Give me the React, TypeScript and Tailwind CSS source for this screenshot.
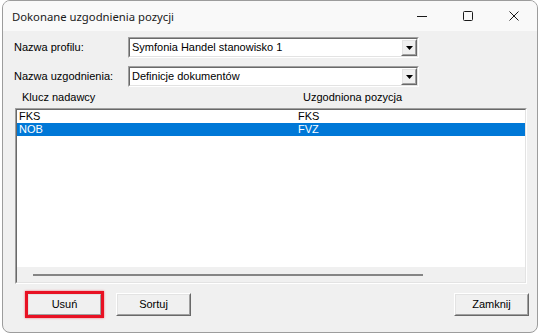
const sunkenOuter = "border border-t-[#a0a0a0] border-l-[#a0a0a0] border-b-white border-r-white";
const sunkenInner = "border border-t-[#696969] border-l-[#696969] border-b-[#e3e3e3] border-r-[#e3e3e3]";
const raisedOuter = "border border-t-white border-l-white border-b-[#696969] border-r-[#696969]";
const raisedInner = "border border-t-[#e3e3e3] border-l-[#e3e3e3] border-b-[#a0a0a0] border-r-[#a0a0a0]";

const ComboBox = ({ value }: { value: string }) => (
  <div className={`w-[291px] h-[21px] ${sunkenOuter}`}>
    <div className={`h-full bg-white flex items-center ${sunkenInner}`}>
      <span className="flex-1 pl-[2px] truncate">{value}</span>
      <div className={`w-[16px] h-full bg-[#f0f0f0] ${raisedOuter}`}>
        <div className={`h-full flex items-center justify-center ${raisedInner}`}>
          <svg width="7" height="4" viewBox="0 0 7 4">
            <path d="M0 0H7L3.5 4Z" fill="#000" />
          </svg>
        </div>
      </div>
    </div>
  </div>
);

const Btn = ({ label }: { label: string }) => (
  <div className={`w-[75px] h-[23px] bg-[#f0f0f0] ${raisedOuter}`}>
    <div className={`h-full flex items-center justify-center ${raisedInner}`}>
      {label}
    </div>
  </div>
);

const rows = [
  { key: "FKS", value: "FKS", selected: false },
  { key: "NOB", value: "FVZ", selected: true },
];

export default function App() {
  return (
    <div className="w-[541px] h-[336px] bg-white pl-[2px]">
      <div className="w-[536px] h-[333px] rounded-[8px] border border-[#9c9c9c] overflow-hidden flex flex-col bg-[#f0f0f0] text-[11px] leading-[13px] text-black font-['Liberation_Sans',Arial,sans-serif]">
        {/* Title bar */}
        <div className="h-[30px] flex items-center bg-[#f9f9f9] shrink-0">
          <span className="flex-1 pl-[9px] text-[11.3px] text-[#1a1a1a] font-['Noto_Sans',sans-serif]">
            Dokonane uzgodnienia pozycji
          </span>
          <div className="w-[46px] h-full flex items-center justify-center">
            <svg width="10" height="10" viewBox="0 0 10 10">
              <path d="M0 5.5H10" stroke="#1a1a1a" strokeWidth="1" />
            </svg>
          </div>
          <div className="w-[46px] h-full flex items-center justify-center">
            <svg width="10" height="10" viewBox="0 0 10 10">
              <rect x="0.5" y="0.5" width="9" height="9" rx="1" fill="none" stroke="#1a1a1a" strokeWidth="1" />
            </svg>
          </div>
          <div className="w-[46px] h-full flex items-center justify-center">
            <svg width="10" height="10" viewBox="0 0 10 10">
              <path d="M0.5 0.5L9.5 9.5M9.5 0.5L0.5 9.5" stroke="#1a1a1a" strokeWidth="1" />
            </svg>
          </div>
        </div>

        {/* Body */}
        <div className="flex-1 flex flex-col pt-[6px]">
          <div className="h-[21px] flex items-center">
            <span className="w-[125px] pl-[11px]">Nazwa profilu:</span>
            <ComboBox value="Symfonia Handel stanowisko 1" />
          </div>
          <div className="h-[21px] mt-[8px] flex items-center">
            <span className="w-[125px] pl-[11px]">Nazwa uzgodnienia:</span>
            <ComboBox value="Definicje dokumentów" />
          </div>

          <div className="h-[21px] flex items-center">
            <span className="w-[300px] pl-[19px]">Klucz nadawcy</span>
            <span>Uzgodniona pozycja</span>
          </div>

          {/* List */}
          <div className={`ml-[12px] w-[512px] h-[176px] ${sunkenOuter}`}>
            <div className={`h-full flex flex-col ${sunkenInner}`}>
              <div className="h-[157px] bg-white">
                {rows.map((r) => (
                  <div
                    key={r.key}
                    className={`h-[13px] flex ${r.selected ? "bg-[#0078d7] text-white" : ""}`}
                  >
                    <span className="w-[279px] pl-[2px]">{r.key}</span>
                    <span className="pl-[2px]">{r.value}</span>
                  </div>
                ))}
              </div>
              <div className="flex-1 flex items-center">
                <div className="ml-[16px] w-[390px] h-[2px] bg-[#858585]" />
              </div>
            </div>
          </div>

          {/* Buttons */}
          <div className="mt-[9px] flex items-center pl-[24px] pr-[8px]">
            <div className="relative">
              <Btn label="Usuń" />
              <div className="absolute -inset-[2px] border-[3px] border-[#e81123] shadow-[0_0_2px_rgba(232,17,35,0.6)]" />
            </div>
            <div className="ml-[14px]">
              <Btn label="Sortuj" />
            </div>
            <div className="ml-auto">
              <Btn label="Zamknij" />
            </div>
          </div>
        </div>
      </div>
    </div>
  );
}
